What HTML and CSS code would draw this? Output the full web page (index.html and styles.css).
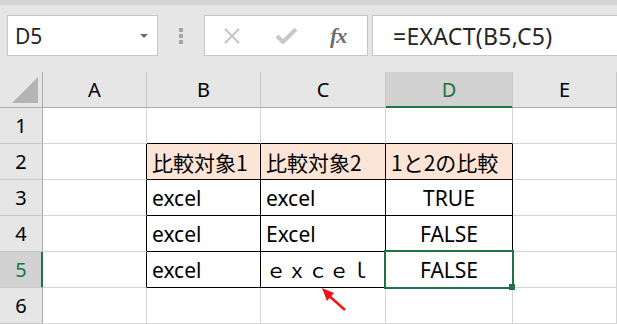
FILE: index.html
```html
<!DOCTYPE html>
<html lang="ja">
<head>
    <meta charset="UTF-8">
    <meta name="viewport" content="width=device-width, initial-scale=1.0">
    <title>EXACT</title>
    <link rel="stylesheet" href="styles.css">
</head>
<body>
    <div class="ribbon-edge"></div>

    <div class="formula-bar">
        <div class="name-box">
            <span>D5</span>
            <span class="caret"></span>
        </div>
        <div class="grip"><i></i><i></i><i></i></div>
        <div class="fx-buttons">
            <svg class="btn-cancel" width="18" height="18" viewBox="0 0 18 18">
                <path d="M2 2 L16 16 M16 2 L2 16" stroke="#c4c4c4" stroke-width="2" fill="none"/>
            </svg>
            <svg class="btn-enter" width="22" height="16" viewBox="0 0 22 16">
                <path d="M1 8 L7 14 L20 1" stroke="#c8c8c8" stroke-width="4" fill="none"/>
            </svg>
            <span class="fx">fx</span>
        </div>
        <div class="formula-input">=EXACT(B5,C5)</div>
    </div>

    <div class="sheet">
        <!-- header row -->
        <div class="corner">
            <svg width="42" height="35" viewBox="0 0 42 35"><polygon points="12,31 38,31 38,5" fill="#b4b4b4"/></svg>
        </div>
        <div class="col-head">A</div>
        <div class="col-head">B</div>
        <div class="col-head">C</div>
        <div class="col-head sel">D</div>
        <div class="col-head">E</div>

        <!-- 1 -->
        <div class="row-head">1</div>
        <div class="cell"></div>
        <div class="cell above"></div>
        <div class="cell above"></div>
        <div class="cell above"></div>
        <div class="cell"></div>

        <!-- 2 -->
        <div class="row-head">2</div>
        <div class="cell before"></div>
        <div class="cell tbl head">比較対象1</div>
        <div class="cell tbl head">比較対象2</div>
        <div class="cell tbl head">1と2の比較</div>
        <div class="cell"></div>

        <!-- 3 -->
        <div class="row-head">3</div>
        <div class="cell before"></div>
        <div class="cell tbl">excel</div>
        <div class="cell tbl">excel</div>
        <div class="cell tbl center">TRUE</div>
        <div class="cell"></div>

        <!-- 4 -->
        <div class="row-head">4</div>
        <div class="cell before"></div>
        <div class="cell tbl">excel</div>
        <div class="cell tbl">Excel</div>
        <div class="cell tbl center">FALSE</div>
        <div class="cell"></div>

        <!-- 5 -->
        <div class="row-head sel">5</div>
        <div class="cell before"></div>
        <div class="cell tbl">excel</div>
        <div class="cell tbl wide">ｅｘｃｅｌ</div>
        <div class="cell tbl center active">FALSE</div>
        <div class="cell"></div>

        <!-- 6 -->
        <div class="row-head">6</div>
        <div class="cell"></div>
        <div class="cell"></div>
        <div class="cell"></div>
        <div class="cell"></div>
        <div class="cell"></div>
    </div>

    <svg class="pointer" width="40" height="40" viewBox="0 0 40 40">
        <line x1="38" y1="39" x2="20" y2="23" stroke="#f01414" stroke-width="2.5"/>
        <polygon points="15,17 27,22 20,30" fill="#f01414"/>
    </svg>
</body>
</html>
```

FILE: styles.css
```css
body {
    margin: 0;
    width: 617px;
    height: 324px;
    overflow: hidden;
    background-color: #e6e6e6;
    font-family: "Noto Sans", "Noto Sans CJK JP", sans-serif;
    color: #000;
    position: relative;
}
.ribbon-edge {
    height: 5px;
    background-color: #d4d4d4;
}

/* formula bar */
.formula-bar {
    display: flex;
    align-items: stretch;
    height: 41px;
    margin-top: 10px;
    margin-bottom: 16px;
    padding-left: 7px;
}
.name-box {
    width: 151px;
    box-sizing: border-box;
    border: 1px solid #c6c6c6;
    background-color: #fff;
    display: flex;
    align-items: center;
    justify-content: space-between;
    padding: 0 9px 0 7px;
    font-size: 21px;
    color: #262626;
}
.caret {
    width: 0;
    height: 0;
    border-left: 4px solid transparent;
    border-right: 4px solid transparent;
    border-top: 4px solid #6b6b6b;
}
.grip {
    width: 46px;
    display: flex;
    flex-direction: column;
    align-items: center;
    justify-content: center;
    gap: 2px;
}
.grip i {
    width: 4px;
    height: 4px;
    background-color: #a6a6a6;
}
.fx-buttons {
    width: 164px;
    box-sizing: border-box;
    border: 1px solid #c6c6c6;
    background-color: #fff;
    display: flex;
    align-items: center;
    padding-left: 18px;
}
.btn-cancel {
    margin-right: 35px;
}
.btn-enter {
    margin-right: 32px;
}
.fx {
    font-family: "Liberation Serif", serif;
    font-style: italic;
    font-weight: bold;
    font-size: 22px;
    color: #6e6e6e;
    letter-spacing: -1px;
}
.formula-input {
    flex: 1;
    margin-left: 4px;
    border: 1px solid #c6c6c6;
    border-right: none;
    background-color: #fff;
    display: flex;
    align-items: center;
    padding-left: 20px;
    font-size: 23px;
    letter-spacing: 0.3px;
    color: #262626;
}

/* sheet grid */
.sheet {
    display: grid;
    grid-template-columns: 43px 104px 114px 125px 127px 1fr;
    grid-auto-rows: 36px;
    background-color: #fff;
}
.corner,
.col-head,
.row-head,
.cell {
    box-sizing: border-box;
    border-right: 1px solid #d4d4d4;
    border-bottom: 1px solid #d4d4d4;
    display: flex;
    align-items: center;
}
.corner {
    background-color: #e6e6e6;
    border-right-color: #ababab;
    border-bottom-color: #ababab;
}
.corner svg {
    display: block;
}
.col-head {
    background-color: #e6e6e6;
    justify-content: center;
    border-right-color: #c8c8c8;
    border-bottom-color: #ababab;
    font-size: 20px;
}
.col-head.sel {
    background-color: #d2d2d2;
    border-bottom-color: #217346;
    box-shadow: inset 0 -1px 0 #217346;
    color: #217346;
}
.row-head {
    background-color: #e6e6e6;
    justify-content: center;
    border-right-color: #ababab;
    border-bottom-color: #c8c8c8;
    font-size: 20px;
}
.row-head.sel {
    background-color: #d2d2d2;
    border-right-color: #217346;
    box-shadow: inset -1px 0 0 #217346;
    color: #217346;
}
.cell {
    padding-left: 5px;
    font-size: 21px;
    white-space: nowrap;
}
.cell.above {
    border-bottom-color: #000;
}
.cell.before {
    border-right-color: #000;
}
.cell.tbl {
    border-right-color: #000;
    border-bottom-color: #000;
}
.cell.head {
    background-color: #fce4d6;
    font-family: "Noto Sans CJK JP", sans-serif;
    font-size: 21px;
}
.cell.wide {
    font-family: "Noto Sans CJK JP", sans-serif;
    font-size: 20px;
    letter-spacing: 1px;
}
.cell.center {
    justify-content: center;
    padding-left: 0;
}
.cell.active {
    position: relative;
}
.cell.active::before {
    content: "";
    position: absolute;
    top: -2px;
    left: -2px;
    right: -2px;
    bottom: -2px;
    border: 2px solid #217346;
}
.cell.active::after {
    content: "";
    position: absolute;
    right: -3px;
    bottom: -3px;
    width: 6px;
    height: 6px;
    background-color: #217346;
}

.pointer {
    position: absolute;
    left: 307px;
    top: 271px;
}
```
